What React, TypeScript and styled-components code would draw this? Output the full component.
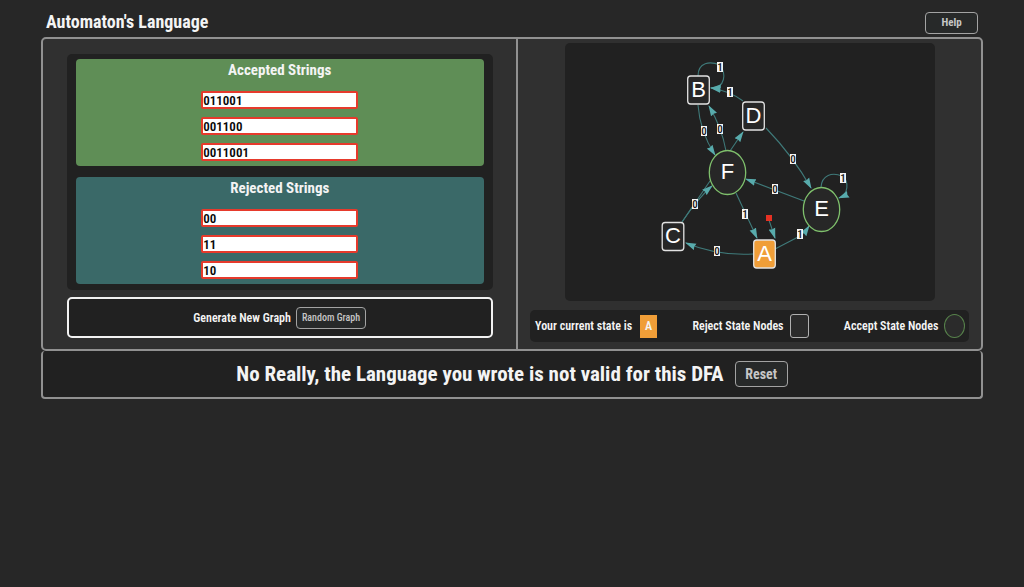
import React from 'react';
import styled, { createGlobalStyle } from 'styled-components';

const GlobalStyle = createGlobalStyle`
  *, *::before, *::after { box-sizing: border-box; }
  body {
    margin: 0;
    background: #272727;
    color: #f4f4f4;
    font-family: 'Roboto Condensed', 'Roboto', sans-serif;
    font-weight: 700;
  }
  h1, h2, p { margin: 0; }
`;

const Page = styled.div`
  width: 92%;
  margin: 0 auto;
`;

const Header = styled.header`
  display: flex;
  align-items: flex-end;
  justify-content: space-between;
  height: 37px;
  padding: 0 5px 3px 5px;
`;

const Title = styled.h1`
  font-size: 18px;
  line-height: 24px;
`;

const Button = styled.button<{ $size?: 'small' | 'large' }>`
  height: ${p => (p.$size === 'large' ? 26 : 22)}px;
  padding: 0 ${p => (p.$size === 'small' ? 5 : 9)}px;
  min-width: 53px;
  border: 1px solid #a3a3a3;
  border-radius: 4px;
  background: #272929;
  color: #c6c6c6;
  font-family: inherit;
  font-weight: ${p => (p.$size === 'small' ? 500 : 700)};
  font-size: ${p => (p.$size === 'large' ? 14 : p.$size === 'small' ? 10 : 11)}px;
  line-height: 16px;
`;

const Workspace = styled.main`
  display: grid;
  grid-template-columns: 475fr 462fr;
  border: 2px solid #919191;
  border-radius: 5px;
  background: #303030;
`;

const InputColumn = styled.section`
  display: flex;
  flex-direction: column;
  align-items: center;
  gap: 7px;
  padding: 15px 0 11px;
  border-right: 2px solid #919191;
`;

const StringsPanel = styled.div`
  display: grid;
  gap: 11px;
  width: 90%;
  padding: 5px 9px 6px;
  border-radius: 5px;
  background: #212121;
`;

const StringGroup = styled.section<{ $color: string }>`
  display: flex;
  flex-direction: column;
  align-items: center;
  gap: 8px;
  padding-bottom: 5px;
  border-radius: 4px;
  background: ${p => p.$color};
`;

const GroupTitle = styled.h2`
  padding-bottom: 2px;
  font-size: 15px;
  line-height: 22px;
`;

const StringInput = styled.input`
  width: 157px;
  height: 18px;
  padding: 1px 0 0;
  border: 2px solid #e63a2c;
  border-radius: 2px;
  background: #fff;
  color: #080808;
  font: 600 13px/16px 'Roboto Condensed', 'Roboto', sans-serif;
`;

const GeneratePanel = styled.div`
  display: flex;
  align-items: center;
  justify-content: center;
  gap: 5px;
  width: 90%;
  height: 41px;
  border: 2px solid #f2f2f2;
  border-radius: 5px;
  background: #212121;
  font-size: 12px;
  font-weight: 600;
`;

const GraphColumn = styled.section`
  display: flex;
  flex-direction: column;
  align-items: center;
  gap: 9px;
  padding: 4px 0 7px;
`;

const Canvas = styled.div`
  width: 80%;
  border-radius: 5px;
  background: #212121;
`;

const Legend = styled.div`
  display: flex;
  align-items: center;
  justify-content: space-between;
  width: 95%;
  height: 32px;
  padding: 0 4px 0 5px;
  border-radius: 5px;
  background: #212121;
  font-size: 12px;
  font-weight: 600;
  line-height: 18px;
  white-space: nowrap;
`;

const LegendItem = styled.div<{ $gap?: number }>`
  display: flex;
  align-items: center;
  gap: ${p => p.$gap ?? 6}px;
`;

const CurrentState = styled.span`
  display: grid;
  place-items: center;
  width: 17px;
  height: 23px;
  background: #f09e38;
`;

const Swatch = styled.span<{ $accept?: boolean }>`
  width: ${p => (p.$accept ? 21 : 19)}px;
  height: 24px;
  border: 1px solid ${p => (p.$accept ? '#57824b' : '#b0b0b0')};
  border-radius: ${p => (p.$accept ? '50%' : '3px')};
  background: #2b2b2b;
`;

const MessageBar = styled.footer`
  display: flex;
  align-items: center;
  justify-content: center;
  gap: 11px;
  min-height: 48px;
  border: 2px solid #919191;
  border-top: 0;
  border-radius: 4px;
  background: #212121;
`;

const Message = styled.p`
  font-size: 21px;
  line-height: 30px;
`;

const Svg = styled.svg`
  display: block;
  width: 368px;
  height: 258px;
`;

const edges = [
  'M698 76 C698 62 710 61 720 65 C726 73 726 88 711 88',
  'M743 101 Q730 91 711 88',
  'M698 105 Q700 132 715 155',
  'M726 151 Q722 128 709 106',
  'M730 151 L743 132',
  'M766 128 Q793 156 811 188',
  'M804 201 L746 179',
  'M736 193 L757 238',
  'M775 249 L800 236 Q805 232 809 226',
  'M753 254 Q717 256 686 243',
  'M682 222 L710 181',
  'M682 222 Q698 198 712 186',
  'M769 220 L775 238',
  'M821 187 C822 175 832 172 842 176 C849 181 849 194 839 198',
];

const labels: [number, number, string][] = [
  [720, 67, '1'], [730, 92, '1'], [704, 131, '0'], [720, 129, '0'],
  [793, 159, '0'], [843, 178, '1'], [775, 189, '0'], [745, 214, '1'],
  [800, 234, '1'], [717, 251, '0'], [695, 204, '0'],
];

const nodes = [
  { id: 'B', x: 698.5, y: 90, accept: false },
  { id: 'D', x: 753.5, y: 116, accept: false },
  { id: 'F', x: 727.5, y: 172.5, accept: true },
  { id: 'E', x: 821.5, y: 209.5, accept: true },
  { id: 'C', x: 673, y: 236.5, accept: false },
  { id: 'A', x: 764.5, y: 254, accept: false, current: true },
];

function Graph() {
  return (
    <Svg viewBox="565 43 368 258" role="img" aria-label="State graph">
      <defs>
        <marker id="arrow" markerUnits="userSpaceOnUse" markerWidth="11" markerHeight="8" refX="10" refY="4" orient="auto">
          <path d="M0 0.5 L11 4 L0 7.5 L1 4 Z" fill="#58abac" />
        </marker>
      </defs>
      {edges.map((d, i) => (
        <path
          key={d}
          d={d}
          fill="none"
          stroke="#3f7a7a"
          strokeWidth="1.1"
          markerEnd={i === 10 ? undefined : 'url(#arrow)'}
        />
      ))}
      <rect x="766" y="215" width="6" height="6" fill="#e63123" />
      {nodes.map(n => (
        <g key={n.id}>
          {n.accept ? (
            <ellipse cx={n.x} cy={n.y} rx="18.2" ry="22" fill="#272727" stroke="#7fc06c" strokeWidth="1.3" />
          ) : (
            <rect
              x={n.x - 10.8}
              y={n.y - 14}
              width="21.6"
              height="28"
              rx="3"
              fill={n.current ? '#f09e38' : '#272727'}
              stroke="#e2e2e2"
              strokeWidth="1.3"
            />
          )}
          <text
            x={n.x}
            y={n.y + 6.5}
            fill="#fff"
            fontFamily="Liberation Sans"
            fontWeight="400"
            fontSize="22"
            textAnchor="middle"
          >
            {n.id}
          </text>
        </g>
      ))}
      {labels.map(([x, y, t]) => (
        <g key={`${x}-${y}`}>
          <rect x={x - 3} y={y - 5} width="6" height="10" fill="#f5f5f5" />
          <text
            x={x}
            y={y + 4}
            fill="#111"
            fontFamily="Roboto Condensed"
            fontSize="11"
            fontWeight="500"
            textAnchor="middle"
          >
            {t}
          </text>
        </g>
      ))}
    </Svg>
  );
}

function Strings({ title, color, values }: { title: string; color: string; values: string[] }) {
  return (
    <StringGroup $color={color}>
      <GroupTitle>{title}</GroupTitle>
      {values.map((v, i) => (
        <StringInput key={v} aria-label={`${title} ${i + 1}`} defaultValue={v} spellCheck={false} />
      ))}
    </StringGroup>
  );
}

export default function App() {
  return (
    <>
      <GlobalStyle />
      <Page>
        <Header>
          <Title>Automaton's Language</Title>
          <Button type="button">Help</Button>
        </Header>
        <Workspace>
          <InputColumn>
            <StringsPanel>
              <Strings title="Accepted Strings" color="#5f8e56" values={['011001', '001100', '0011001']} />
              <Strings title="Rejected Strings" color="#3a6968" values={['00', '11', '10']} />
            </StringsPanel>
            <GeneratePanel>
              <span>Generate New Graph</span>
              <Button type="button" $size="small">Random Graph</Button>
            </GeneratePanel>
          </InputColumn>
          <GraphColumn>
            <Canvas>
              <Graph />
            </Canvas>
            <Legend>
              <LegendItem $gap={8}>
                <span>Your current state is</span>
                <CurrentState>A</CurrentState>
              </LegendItem>
              <LegendItem>
                <span>Reject State Nodes</span>
                <Swatch />
              </LegendItem>
              <LegendItem>
                <span>Accept State Nodes</span>
                <Swatch $accept />
              </LegendItem>
            </Legend>
          </GraphColumn>
        </Workspace>
        <MessageBar>
          <Message>No Really, the Language you wrote is not valid for this DFA</Message>
          <Button type="button" $size="large">Reset</Button>
        </MessageBar>
      </Page>
    </>
  );
}
